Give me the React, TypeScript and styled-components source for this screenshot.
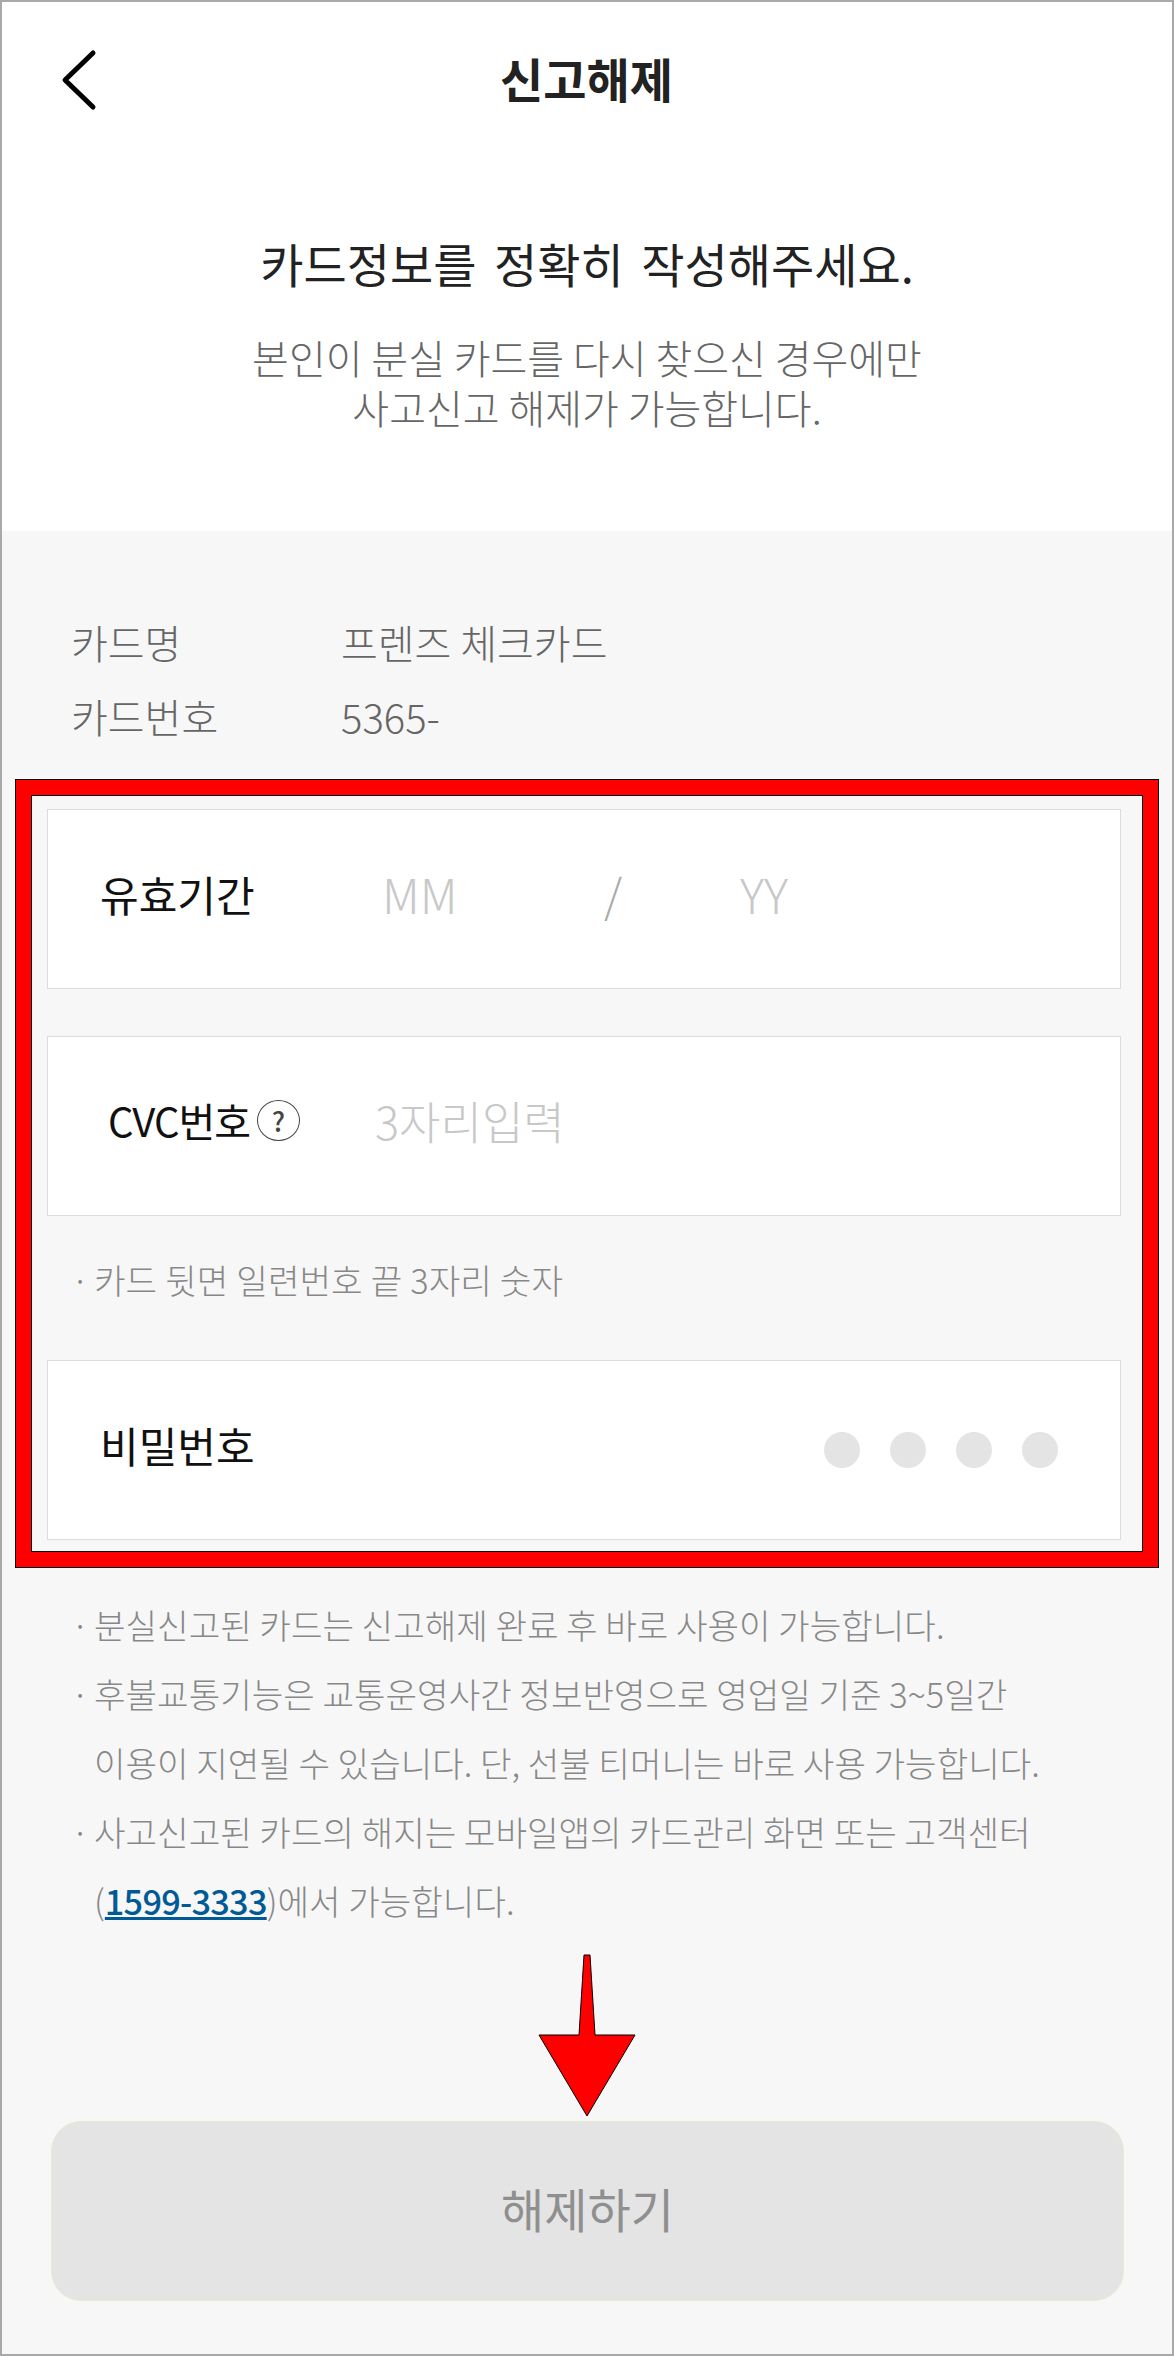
import React from 'react';
import styled, { createGlobalStyle } from 'styled-components';

const GlobalStyle = createGlobalStyle`
    * {
        box-sizing: border-box;
    }
    body {
        margin: 0;
        background: #fff;
        font-family: "Noto Sans CJK KR", "Noto Sans", sans-serif;
    }
`;

const Frame = styled.div`
    position: relative;
    width: 1174px;
    height: 2356px;
    border: 2px solid #a9a9a9;
    background: #fff;
    display: flex;
    flex-direction: column;
    overflow: hidden;
`;

const Header = styled.header`
    height: 156px;
    display: grid;
    grid-template-columns: 1fr auto 1fr;
    align-items: center;
    padding-left: 59px;
`;

const BackButton = styled.button`
    width: 36px;
    height: 62px;
    padding: 0;
    border: 0;
    background: none;
    display: flex;
`;

const Title = styled.h1`
    margin: -6px 0 0;
    font-size: 47px;
    font-weight: 700;
    color: #222;
    transform: translateX(-30px);
`;

const Intro = styled.section`
    padding: 75px 0 99px;
    text-align: center;
`;

const Heading = styled.h2`
    margin: 0;
    font-size: 47px;
    line-height: 60px;
    font-weight: 400;
    word-spacing: 7px;
    color: #222;
`;

const SubText = styled.p`
    margin: 39px 0 0;
    font-size: 40px;
    line-height: 50px;
    font-weight: 300;
    color: #666;
`;

const Body = styled.main`
    flex: 1;
    background: #f7f7f7;
    padding: 74px 0 0 45px;
`;

const InfoRow = styled.div`
    display: flex;
    height: 74px;
    align-items: center;
    padding-left: 24px;
    font-size: 40px;
    font-weight: 300;
    color: #666;
`;

const InfoLabel = styled.span`
    width: 270px;
`;

const Fields = styled.div`
    margin-top: 56px;
    width: 1074px;
`;

const Field = styled.div<{ $gap?: number }>`
    height: 180px;
    margin-top: ${(p) => p.$gap ?? 0}px;
    background: #fff;
    border: 1px solid #dcdcdc;
    display: flex;
    align-items: center;
    position: relative;
    padding-bottom: 12px;
`;

const FieldLabel = styled.span<{ $left: number; $width: number; $size?: number }>`
    width: ${(p) => p.$width}px;
    margin-left: ${(p) => p.$left}px;
    flex: none;
    font-size: ${(p) => p.$size ?? 42}px;
    font-weight: 400;
    letter-spacing: ${(p) => (p.$size ? '-1px' : '0')};
    color: #111;
    white-space: nowrap;
`;

const Placeholder = styled.span<{ $width?: number; $size?: number; $offset?: number }>`
    width: ${(p) => (p.$width ? `${p.$width}px` : 'auto')};
    margin-left: ${(p) => p.$offset ?? 0}px;
    flex: none;
    font-size: ${(p) => p.$size ?? 45}px;
    font-weight: 300;
    color: #c8c8c8;
`;

const Slash = styled(Placeholder)`
    color: #aaa;
`;

const HelpIcon = styled.span`
    width: 43px;
    height: 41px;
    margin-left: 8px;
    flex: none;
    border: 1px solid #444;
    border-radius: 50%;
    display: flex;
    align-items: center;
    justify-content: center;
    font-size: 27px;
    font-weight: 500;
    color: #444;
`;

const Dots = styled.div`
    margin-left: auto;
    margin-right: 62px;
    display: flex;
    gap: 30px;
    padding-top: 12px;
`;

const Dot = styled.span`
    width: 36px;
    height: 36px;
    border-radius: 50%;
    background: #e4e4e4;
`;

const Hint = styled.p`
    position: relative;
    margin: 43px 0 61px;
    padding-left: 47px;
    font-size: 34.3px;
    line-height: 40px;
    font-weight: 300;
    word-spacing: 0.5px;
    color: #888;
    &::before {
        content: '·';
        position: absolute;
        left: 24px;
    }
`;

const Notes = styled.ul`
    margin: 50px 0 0;
    padding: 0 0 0 47px;
    list-style: none;
    font-size: 34.3px;
    line-height: 69px;
    font-weight: 300;
    color: #888;
`;

const Note = styled.li`
    position: relative;
    &::before {
        content: '·';
        position: absolute;
        left: -23px;
    }
`;

const PhoneLink = styled.a`
    font-weight: 500;
    letter-spacing: -0.75px;
    color: #005a96;
    text-decoration: underline;
`;

const SubmitButton = styled.button`
    display: block;
    width: 1073px;
    height: 180px;
    margin: 186px 0 0 4px;
    padding-bottom: 8px;
    background: #e4e4e4;
    border: 1px solid #ece9cf;
    border-radius: 30px;
    font-family: inherit;
    font-size: 47px;
    font-weight: 400;
    color: #8f8f8f;
`;

// red annotations laid over the screenshot
const Highlight = styled.div`
    position: absolute;
    left: 13px;
    top: 777px;
    width: 1144px;
    height: 789px;
    border: 16px solid #f00;
    outline: 1px solid #000;
    outline-offset: -1px;
    box-shadow: inset 0 0 0 1px #000;
    pointer-events: none;
`;

const Arrow = styled.svg`
    position: absolute;
    left: 533px;
    top: 1950px;
`;

const App = () => {
    return (
        <>
            <GlobalStyle />
            <Frame>
                <Header>
                    <BackButton aria-label="뒤로">
                        <svg width="36" height="62" viewBox="0 0 36 62" fill="none">
                            <path d="M32 4 L4 31 L32 58" stroke="#000" strokeWidth="5" strokeLinecap="round" strokeLinejoin="round" />
                        </svg>
                    </BackButton>
                    <Title>신고해제</Title>
                </Header>
                <Intro>
                    <Heading>카드정보를 정확히 작성해주세요.</Heading>
                    <SubText>
                        본인이 분실 카드를 다시 찾으신 경우에만
                        <br />
                        사고신고 해제가 가능합니다.
                    </SubText>
                </Intro>
                <Body>
                    <InfoRow>
                        <InfoLabel>카드명</InfoLabel>
                        <span>프렌즈 체크카드</span>
                    </InfoRow>
                    <InfoRow>
                        <InfoLabel>카드번호</InfoLabel>
                        <span>5365-</span>
                    </InfoRow>
                    <Fields>
                        <Field>
                            <FieldLabel $left={52} $width={282}>유효기간</FieldLabel>
                            <Placeholder $width={222} $size={48}>MM</Placeholder>
                            <Slash $width={136} $size={46}>/</Slash>
                            <Placeholder $size={48}>YY</Placeholder>
                        </Field>
                        <Field $gap={47}>
                            <FieldLabel $left={60} $width={141} $size={40}>CVC번호</FieldLabel>
                            <HelpIcon>?</HelpIcon>
                            <Placeholder $offset={75}>3자리입력</Placeholder>
                        </Field>
                        <Hint>카드 뒷면 일련번호 끝 3자리 숫자</Hint>
                        <Field>
                            <FieldLabel $left={52} $width={160}>비밀번호</FieldLabel>
                            <Dots>
                                <Dot />
                                <Dot />
                                <Dot />
                                <Dot />
                            </Dots>
                        </Field>
                    </Fields>
                    <Notes>
                        <Note>분실신고된 카드는 신고해제 완료 후 바로 사용이 가능합니다.</Note>
                        <Note>
                            후불교통기능은 교통운영사간 정보반영으로 영업일 기준 3~5일간
                            <br />
                            이용이 지연될 수 있습니다. 단, 선불 티머니는 바로 사용 가능합니다.
                        </Note>
                        <Note>
                            사고신고된 카드의 해지는 모바일앱의 카드관리 화면 또는 고객센터
                            <br />
                            (<PhoneLink>1599-3333</PhoneLink>)에서 가능합니다.
                        </Note>
                    </Notes>
                    <SubmitButton>해제하기</SubmitButton>
                </Body>
                <Highlight />
                <Arrow width="104" height="170" viewBox="0 0 104 170">
                    <path d="M49 3 L55 3 L60 83 L100 83 L52 164 L4 83 L44 83 Z" fill="#f00" stroke="#000" strokeWidth="1" />
                </Arrow>
            </Frame>
        </>
    );
};

export default App;
